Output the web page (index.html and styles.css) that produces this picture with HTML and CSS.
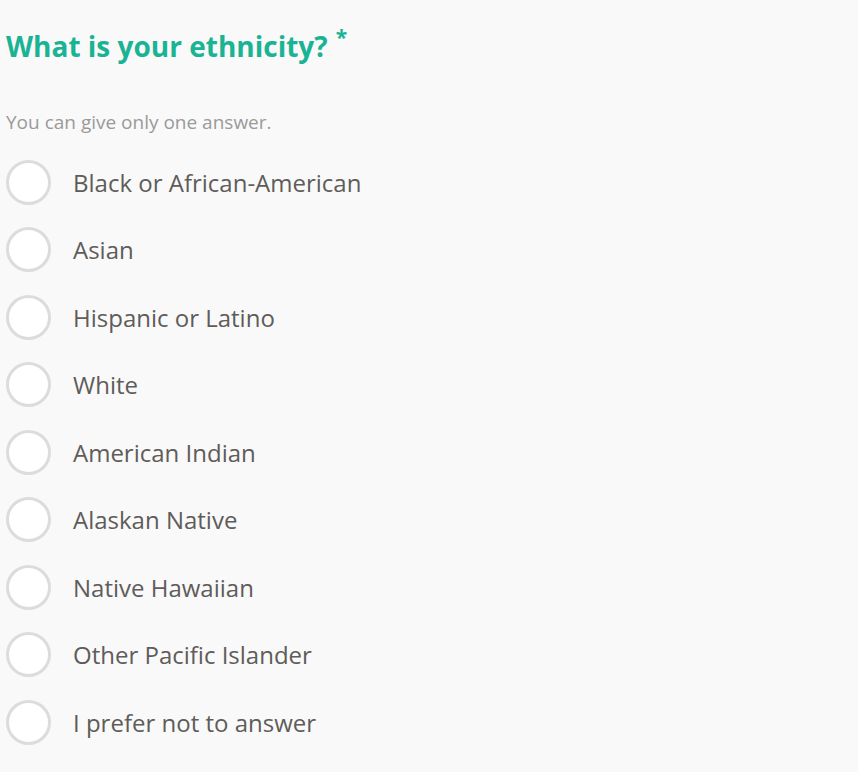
FILE: index.html
```html
<!DOCTYPE html>
<html>
<head>
<meta charset="utf-8">
<link rel="stylesheet" href="styles.css">
</head>
<body>
<div class="question">
  <h1 class="title">What is your ethnicity?<span class="req">*</span></h1>
  <p class="hint">You can give only one answer.</p>
  <ul class="options">
    <li class="option"><span class="radio"></span><span class="label">Black or African-American</span></li>
    <li class="option"><span class="radio"></span><span class="label">Asian</span></li>
    <li class="option"><span class="radio"></span><span class="label">Hispanic or Latino</span></li>
    <li class="option"><span class="radio"></span><span class="label">White</span></li>
    <li class="option"><span class="radio"></span><span class="label">American Indian</span></li>
    <li class="option"><span class="radio"></span><span class="label">Alaskan Native</span></li>
    <li class="option"><span class="radio"></span><span class="label">Native Hawaiian</span></li>
    <li class="option"><span class="radio"></span><span class="label">Other Pacific Islander</span></li>
    <li class="option"><span class="radio"></span><span class="label">I prefer not to answer</span></li>
  </ul>
</div>
</body>
</html>
```
FILE: styles.css
```css
html, body {
  margin: 0;
  padding: 0;
  background: #f9f9f9;
}
body {
  font-family: "Open Sans", "Liberation Sans", sans-serif;
}
.question {
  padding: 26px 6px 0 6px;
}
.title {
  margin: 0;
  font-size: 28px;
  line-height: 40px;
  font-weight: 700;
  color: #1ab394;
}
.req {
  font-size: 21px;
  position: relative;
  top: -12px;
  margin-left: 8px;
}
.hint {
  margin: 41px 0 0 0;
  font-size: 19px;
  line-height: 24px;
  color: #9a9a9a;
}
.options {
  list-style: none;
  margin: 26px 0 0 0;
  padding: 0;
  display: flex;
  flex-direction: column;
  gap: 23px;
}
.option {
  display: flex;
  align-items: center;
  gap: 22px;
  height: 44.5px;
}
.radio {
  box-sizing: border-box;
  width: 45px;
  height: 45px;
  border-radius: 50%;
  border: 3px solid #dcdcdc;
  background: #fff;
  flex: none;
}
.label {
  font-size: 24px;
  color: #5f5c5a;
}
```
